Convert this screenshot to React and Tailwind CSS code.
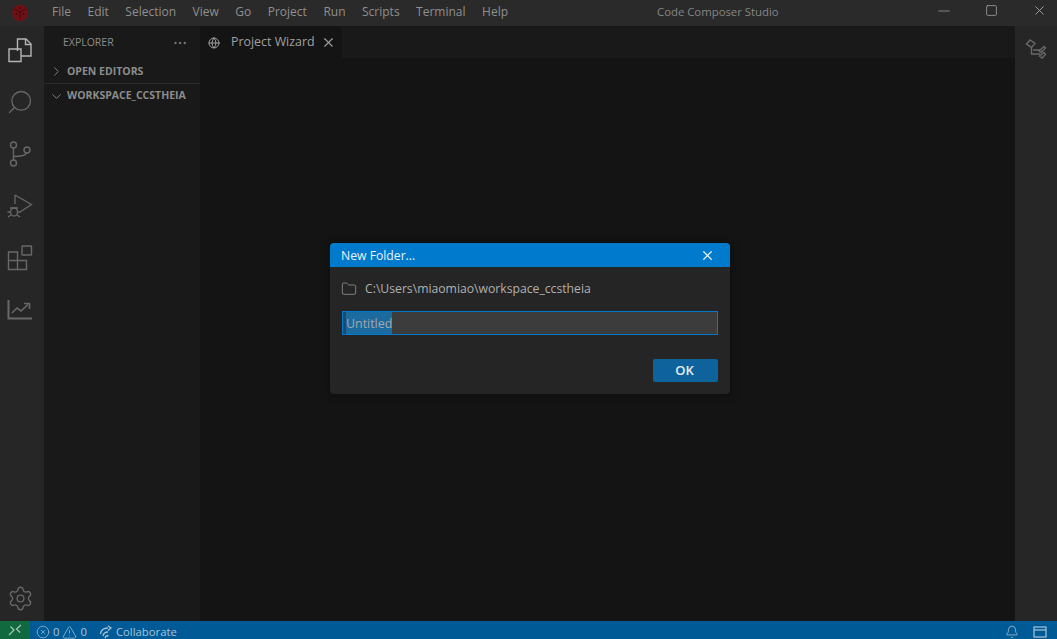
import { X, Minus, Square, Globe, ChevronRight, ChevronDown, Ellipsis, Search, Bell, Settings, Folder, CircleX, TriangleAlert } from "lucide-react";

const menus = ["File", "Edit", "Selection", "View", "Go", "Project", "Run", "Scripts", "Terminal", "Help"];

function ActivityIcon({ children }) {
    return <div className="w-[44px] h-[52px] pr-[4px] flex items-center justify-center text-[#686868]">{children}</div>;
}

export default function App() {
    return (
        <div className="w-[1057px] h-[639px] flex flex-col overflow-hidden bg-[#141414] font-['Open_Sans','Noto_Sans',sans-serif] relative">
            {/* title bar */}
            <div className="h-[26px] flex items-center bg-[#2a2a2a] text-[#8f8f8f] text-[12px] shrink-0">
                <div className="w-[40px] flex justify-center">
                    <svg width="18" height="18" viewBox="0 0 18 18">
                        <path d="M9 .5 L14.5 2.5 L17 7 L16 13 L12 17 L6 17 L2 13 L1 7 L3.5 2.5 Z" fill="#6f1015" />
                        <path d="M9 8 L3.5 5 M9 8 L14.5 5 M9 8 L9 16" stroke="#430a0d" strokeWidth="1" />
                        <circle cx="9" cy="4" r="1" fill="#430a0d" />
                        <circle cx="5.5" cy="10" r="1" fill="#430a0d" />
                        <circle cx="12.5" cy="10" r="1" fill="#430a0d" />
                    </svg>
                </div>
                <div className="flex gap-[16.5px] ml-[12px] pb-[3px]">
                    {menus.map((m) => <span key={m}>{m}</span>)}
                </div>
                <div className="absolute left-[657px] top-[3px] text-[11.35px] text-[#858585]">Code Composer Studio</div>
                <div className="ml-auto flex items-center text-[#a0a0a0] pb-[5px]">
                    <Minus size={18} strokeWidth={1} className="mr-[32px]" />
                    <Square size={13} strokeWidth={1.5} className="mr-[34px]" />
                    <X size={15} strokeWidth={1.5} className="mr-[10px]" />
                </div>
            </div>

            <div className="flex flex-1 min-h-0">
                {/* activity bar */}
                <div className="w-[44px] bg-[#262626] flex flex-col shrink-0">
                    <div className="-mt-[2px]">
                        <ActivityIcon>
                            <svg width="26" height="26" viewBox="0 0 26 26" fill="none" stroke="#b5b5b5" strokeWidth="1.4">
                                <path d="M10.5 14 V2 H19 L24 7 V19 H14" />
                                <path d="M18.5 2 V7.5 H24" />
                                <path d="M2 12 H14 V24.5 H2 Z" />
                            </svg>
                        </ActivityIcon>
                    </div>
                    <ActivityIcon><Search size={28} strokeWidth={1.1} className="-scale-x-100" /></ActivityIcon>
                    <ActivityIcon>
                        <svg width="24" height="26" viewBox="0 0 24 26" fill="none" stroke="currentColor" strokeWidth="1.4">
                            <circle cx="5.5" cy="4" r="3" />
                            <circle cx="19" cy="9" r="3" />
                            <circle cx="5.5" cy="22" r="3" />
                            <path d="M5.5 7 V19 M5.5 15.5 C12 15.5 17.5 15 18.5 12" />
                        </svg>
                    </ActivityIcon>
                    <ActivityIcon>
                        <svg width="26" height="26" viewBox="0 0 26 26" fill="none" stroke="currentColor" strokeWidth="1.3">
                            <path d="M8 2 L24.5 11.5 L13 19 M8 2 V11" />
                            <ellipse cx="7" cy="19" rx="3.5" ry="4" />
                            <path d="M3 15 H11 M.5 19 H3 M11 19 H13.5 M1 24 L4 22 M13 24 L10 22" />
                        </svg>
                    </ActivityIcon>
                    <ActivityIcon>
                        <svg width="26" height="26" viewBox="0 0 26 26" fill="none" stroke="currentColor" strokeWidth="1.4">
                            <rect x="15" y="1" width="9.5" height="9" rx=".5" />
                            <path d="M1.5 7 H10.5 V24.5 H1.5 Z M1.5 15.5 H19.5 V24.5 H10.5" />
                        </svg>
                    </ActivityIcon>
                    <ActivityIcon>
                        <svg width="26" height="26" viewBox="0 0 26 26" fill="none" stroke="currentColor" strokeWidth="1.6">
                            <path d="M1.5 3 V21.5 H25" strokeWidth="2" />
                            <path d="M5 16 L10 11 L14 14 L21 7.5" />
                            <path d="M17 6.5 H22.5 V12" fill="none" />
                        </svg>
                    </ActivityIcon>
                    <div className="mt-auto h-[46px] pr-[4px] flex items-center justify-center text-[#686868]">
                        <Settings size={27} strokeWidth={1.2} />
                    </div>
                </div>

                {/* explorer */}
                <div className="w-[156px] bg-[#191919] shrink-0 text-[#8c8c8c]">
                    <div className="h-[34px] flex items-center justify-between pl-[19px] pr-[12px] text-[10.5px]">
                        <span>EXPLORER</span>
                        <Ellipsis size={16} strokeWidth={1.5} />
                    </div>
                    <div className="h-[24px] flex items-center pl-[5px] gap-[3px] text-[10.5px] font-bold border-b border-[#2c2c2c]">
                        <ChevronRight size={15} strokeWidth={1.4} />
                        <span>OPEN EDITORS</span>
                    </div>
                    <div className="h-[24px] flex items-center pl-[5px] gap-[3px] text-[10.5px] font-bold">
                        <ChevronDown size={15} strokeWidth={1.4} />
                        <span>WORKSPACE_CCSTHEIA</span>
                    </div>
                </div>

                {/* editor */}
                <div className="flex-1 flex flex-col min-w-0">
                    <div className="h-[32px] bg-[#191919] flex shrink-0">
                        <div className="w-[142px] bg-[#141414] flex items-center pl-[8px] pt-[1px] text-[#a0a0a0] text-[12.4px]">
                            <Globe size={12} strokeWidth={2} />
                            <span className="ml-[11px]">Project Wizard</span>
                            <X size={15} strokeWidth={1.8} className="ml-[6px]" />
                        </div>
                    </div>
                    <div className="flex-1 bg-[#141414]" />
                </div>

                {/* right bar */}
                <div className="w-[42px] bg-[#262626] shrink-0 flex justify-center pt-[12px] text-[#686868]">
                    <svg width="22" height="22" viewBox="0 0 22 22" fill="none" stroke="currentColor" strokeWidth="1.4">
                        <path d="M1.5 6 L5 2 L10 5.5 L6.5 9.5 Z" />
                        <path d="M14 13 L19 8.5 L20.5 10 L16 14.5 Z" />
                        <path d="M14.5 18 L19 14.5 L20.5 16.5 L17 20 Z" />
                        <path d="M6.5 9.5 V16 H15 M8 12 H15" />
                    </svg>
                </div>
            </div>

            {/* status bar */}
            <div className="h-[18px] bg-[#005a96] flex items-center shrink-0 text-[#a6c3d6] text-[11.3px] overflow-hidden">
                <div className="w-[30px] h-full bg-[#10693f] flex items-center justify-center text-[#a9c9b8]">
                    <svg width="14" height="12" viewBox="0 0 14 12" fill="none" stroke="currentColor" strokeWidth="1.2">
                        <path d="M1 11 L6 6 L2.5 2.5 M13 1 L8.5 5 L12 8.5" />
                    </svg>
                </div>
                <div className="flex items-center pt-[4px]">
                    <CircleX size={14} strokeWidth={1.2} className="ml-[6px]" />
                    <span className="ml-[3px]">0</span>
                    <TriangleAlert size={15} strokeWidth={1.2} className="ml-[3px]" />
                    <span className="ml-[3px]">0</span>
                    <svg width="14" height="14" viewBox="0 0 14 14" fill="none" stroke="currentColor" strokeWidth="1.3" className="ml-[12px]">
                        <path d="M1.5 9 C2 5 5 3 9 3 M9 1 L12 3 L9 5.5 M4 11 C4.5 8.5 6.5 7 9 7 M6 13 C6.5 11.5 7.5 10.5 9.5 10.5" />
                    </svg>
                    <span className="ml-[3px]">Collaborate</span>
                </div>
                <div className="ml-auto flex items-center pt-[4px]">
                    <Bell size={14} strokeWidth={1.3} className="mr-[14px]" />
                    <svg width="14" height="12" viewBox="0 0 14 12" fill="none" stroke="currentColor" strokeWidth="1.2" className="mr-[10px]">
                        <rect x="1" y="1" width="12" height="10" />
                        <path d="M1 4 H13" />
                    </svg>
                </div>
            </div>

            {/* dialog */}
            <div className="absolute left-[330px] top-[243px] w-[400px] h-[151px] bg-[#252525] rounded-[4px] overflow-hidden shadow-[0_0_8px_rgba(0,0,0,0.5)]">
                <div className="h-[24px] bg-[#007acc] flex items-center justify-between pl-[11px] pr-[15px] text-[12.2px]">
                    <span className="text-[#e8f3fb] pt-[2px]">New Folder...</span>
                    <X size={15} strokeWidth={2} className="text-[#e8f3fb]" />
                </div>
                <div className="flex items-center pl-[11px] mt-[13px] h-[18px] text-[#b0b0b0] text-[12.2px]">
                    <Folder size={16} strokeWidth={1.1} className="text-[#a0a0a0]" />
                    <span className="ml-[8px]">C:\Users\miaomiao\workspace_ccstheia</span>
                </div>
                <div className="mx-[12px] mt-[13px] h-[24px] w-[376px] bg-[#3c3c3c] border border-[#007acc] flex items-center text-[12.4px] text-[#a8a8a8]">
                    <span className="w-[3px] h-[22px] bg-[#1d4a68]" />
                    <span className="bg-[#1b6aa0] h-[22px] leading-[23px]">Untitled</span>
                </div>
                <div className="flex justify-end mt-[24px] pr-[12px]">
                    <div className="w-[65px] h-[23px] bg-[#0e639c] rounded-[2px] flex items-center justify-center text-[#e4eef5] text-[13px] font-semibold pr-[2px]">OK</div>
                </div>
            </div>
        </div>
    );
}
